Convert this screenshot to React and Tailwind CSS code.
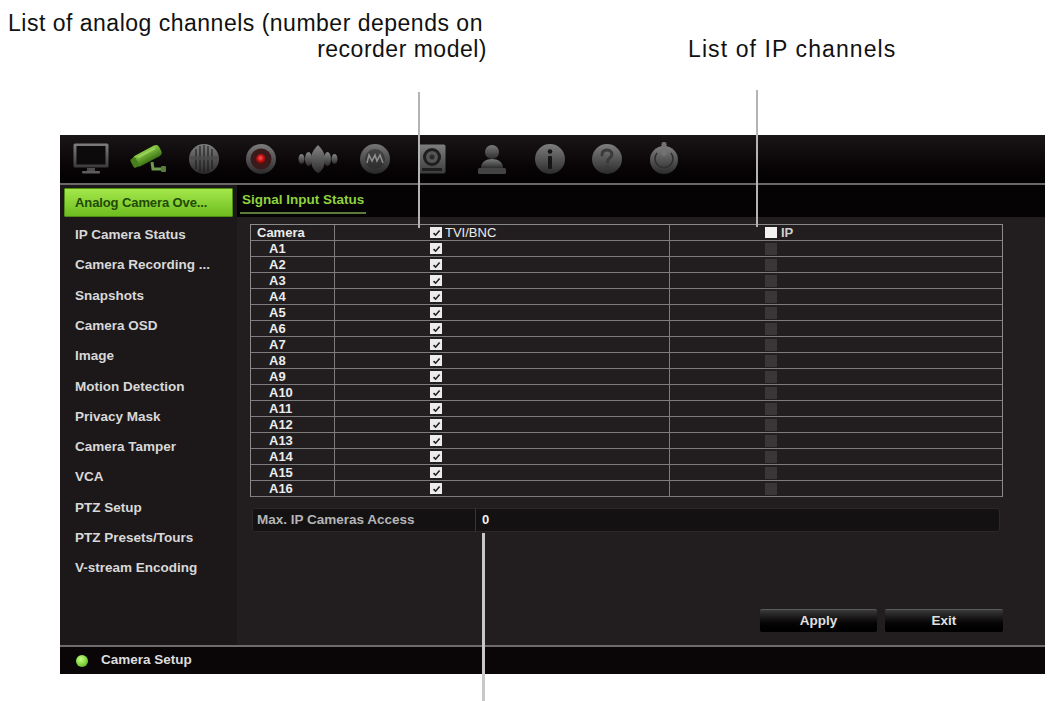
import React from "react";

const sideItems = [
  "IP Camera Status",
  "Camera Recording ...",
  "Snapshots",
  "Camera OSD",
  "Image",
  "Motion Detection",
  "Privacy Mask",
  "Camera Tamper",
  "VCA",
  "PTZ Setup",
  "PTZ Presets/Tours",
  "V-stream Encoding",
];

const rows = Array.from({ length: 16 }, (_, i) => "A" + (i + 1));

function Metal({ id, light = "#9a9a9a", dark = "#262626" }) {
  return (
    <linearGradient id={id} x1="0" y1="0" x2="0" y2="1">
      <stop offset="0" stopColor={light} />
      <stop offset="1" stopColor={dark} />
    </linearGradient>
  );
}

function Check() {
  return (
    <div className="w-[12px] h-[11px] bg-[#ececec] flex items-center justify-center">
      <svg width="9" height="8" viewBox="0 0 9 8">
        <path d="M1.5 4.2 L3.6 6.2 L7.6 1.6" stroke="#222" strokeWidth="1.6" fill="none" />
      </svg>
    </div>
  );
}

function Icons() {
  return (
    <div className="flex items-center h-full">
      {/* monitor */}
      <svg width="36" height="32" viewBox="0 0 36 32" className="ml-[13px]">
        <defs><Metal id="mon" light="#7e7e7e" dark="#3a3a3a" /></defs>
        <rect x="0.5" y="0.5" width="35" height="24" rx="1.5" fill="url(#mon)" />
        <rect x="3.5" y="3" width="29" height="18.5" fill="#0c0a0b" />
        <rect x="14" y="25" width="8" height="3" fill="#4e4e4e" />
        <rect x="9" y="28" width="18" height="2.5" rx="1" fill="#5e5e5e" />
      </svg>
      {/* camera */}
      <svg width="40" height="32" viewBox="0 0 40 32" className="ml-[19px]">
        <defs>
          <linearGradient id="cam" x1="0" y1="0" x2="0" y2="1">
            <stop offset="0" stopColor="#8fcf48" />
            <stop offset="1" stopColor="#3c7414" />
          </linearGradient>
        </defs>
        <g transform="rotate(-28 19 13)">
          <rect x="5" y="7" width="29" height="12" rx="4" fill="url(#cam)" />
          <rect x="2" y="8" width="6" height="10" rx="2" fill="#487f1c" />
          <rect x="10" y="9" width="20" height="2" rx="1" fill="#b9ec7a" opacity="0.5" />
        </g>
        <path d="M24 19 L25 26 L37 26" stroke="#6f9850" strokeWidth="3" fill="none" />
        <rect x="33" y="23" width="5" height="6" rx="1" fill="#587f3a" />
      </svg>
      {/* dome */}
      <svg width="32" height="32" viewBox="0 0 32 32" className="ml-[20px]">
        <defs><Metal id="dome" light="#7e7e7e" dark="#2a2a2a" /></defs>
        <circle cx="16" cy="16" r="15" fill="url(#dome)" />
        <g stroke="#1d1d1d" strokeWidth="1.1">
          <line x1="8" y1="6" x2="8" y2="26" />
          <line x1="12" y1="3" x2="12" y2="29" />
          <line x1="16" y1="2" x2="16" y2="30" />
          <line x1="20" y1="3" x2="20" y2="29" />
          <line x1="24" y1="6" x2="24" y2="26" />
        </g>
        <rect x="2" y="13" width="28" height="4" fill="#4c4c4c" opacity="0.8" />
      </svg>
      {/* record */}
      <svg width="32" height="32" viewBox="0 0 32 32" className="ml-[25px]">
        <defs>
          <Metal id="rec" light="#7c7c7c" dark="#2a2a2a" />
          <radialGradient id="red" cx="0.45" cy="0.4" r="0.6">
            <stop offset="0" stopColor="#ff5a5a" />
            <stop offset="0.5" stopColor="#c81414" />
            <stop offset="1" stopColor="#5a0606" />
          </radialGradient>
        </defs>
        <circle cx="16" cy="16" r="15" fill="url(#rec)" />
        <circle cx="16" cy="16" r="10.5" fill="#3a1a1b" />
        <circle cx="16" cy="16" r="5" fill="url(#red)" />
      </svg>
      {/* ptz */}
      <svg width="40" height="32" viewBox="0 0 40 32" className="ml-[21px]">
        <defs><Metal id="ptz" light="#858585" dark="#2c2c2c" /></defs>
        <ellipse cx="3.5" cy="16" rx="3" ry="5" fill="url(#ptz)" />
        <ellipse cx="10.5" cy="16" rx="3.5" ry="7" fill="url(#ptz)" />
        <path d="M20 2 C26 8 27 12 27 17 C27 24 23 29 20 30 C17 29 13 24 13 17 C13 12 14 8 20 2 Z" fill="url(#ptz)" />
        <ellipse cx="29.5" cy="16" rx="3.5" ry="7" fill="url(#ptz)" />
        <ellipse cx="36.5" cy="16" rx="3" ry="5" fill="url(#ptz)" />
      </svg>
      {/* network */}
      <svg width="32" height="32" viewBox="0 0 32 32" className="ml-[21px]">
        <defs><Metal id="net" light="#767676" dark="#262626" /></defs>
        <circle cx="16" cy="16" r="15" fill="url(#net)" />
        <circle cx="16" cy="16" r="10" fill="#2a2a2a" opacity="0.6" />
        <path d="M8 20 L10 12 L13 18 L16 12 L18 18 L21 12 L24 20" stroke="#8e8e8e" strokeWidth="1.6" fill="none" />
      </svg>
      {/* hdd */}
      <svg width="28" height="30" viewBox="0 0 28 30" className="ml-[27px]">
        <defs><Metal id="hdd" light="#7e7e7e" dark="#3c3c3c" /></defs>
        <rect x="0.5" y="0.5" width="27" height="29" rx="2" fill="url(#hdd)" />
        <circle cx="14" cy="13" r="9" fill="#1e1e1e" />
        <circle cx="14" cy="13" r="6" fill="#555" />
        <circle cx="14" cy="13" r="2.5" fill="#2a2a2a" />
        <rect x="4" y="24" width="20" height="3" fill="#1e1e1e" />
      </svg>
      {/* user */}
      <svg width="30" height="32" viewBox="0 0 30 32" className="ml-[31px]">
        <defs><Metal id="usr" light="#7a7a7a" dark="#2d2d2d" /></defs>
        <circle cx="15" cy="9" r="7" fill="url(#usr)" />
        <path d="M4 25 C4 19 9 16 15 16 C21 16 26 19 26 25 Z" fill="url(#usr)" />
        <rect x="1" y="25" width="28" height="6" rx="1.5" fill="#444" />
      </svg>
      {/* info */}
      <svg width="32" height="32" viewBox="0 0 32 32" className="ml-[27px]">
        <defs><Metal id="inf" light="#7e7e7e" dark="#2b2b2b" /></defs>
        <circle cx="16" cy="16" r="15" fill="url(#inf)" />
        <circle cx="16" cy="8.5" r="2.3" fill="#151515" />
        <rect x="14" y="13" width="4" height="13" rx="1" fill="#151515" />
      </svg>
      {/* help */}
      <svg width="32" height="32" viewBox="0 0 32 32" className="ml-[25px]">
        <defs><Metal id="hlp" light="#7e7e7e" dark="#2b2b2b" /></defs>
        <circle cx="16" cy="16" r="15" fill="url(#hlp)" />
        <path d="M11 12 C11 8 13.5 7 16 7 C19 7 21 9 21 11.5 C21 14.5 16.5 15 16.5 19" stroke="#3a3a3a" strokeWidth="3" fill="none" strokeLinecap="round" />
        <circle cx="16.5" cy="24" r="1.9" fill="#3a3a3a" />
      </svg>
      {/* power */}
      <svg width="32" height="34" viewBox="0 0 32 34" className="ml-[25px] -mt-[2px]">
        <defs><Metal id="pwr" light="#7e7e7e" dark="#2b2b2b" /></defs>
        <circle cx="16" cy="19" r="14" fill="url(#pwr)" />
        <rect x="13.5" y="1" width="5" height="14" rx="2" fill="#727272" />
        <path d="M9 12 A9 9 0 1 0 23 12" stroke="#2e2e2e" strokeWidth="1.5" fill="none" />
      </svg>
    </div>
  );
}

export default function App() {
  return (
    <div className="relative w-[1050px] h-[701px] bg-white overflow-hidden font-['Liberation_Sans',Arial,sans-serif]">
      {/* annotations */}
      <div className="h-[135px] flex items-start text-[#111] text-[23px] leading-[26px] tracking-[0.5px]">
        <div className="ml-[8px] mt-[10px] w-[479px] flex flex-col">
          <div className="whitespace-nowrap">List of analog channels (number depends on</div>
          <div className="text-right whitespace-nowrap">recorder model)</div>
        </div>
        <div className="ml-[201px] mt-[36px] whitespace-nowrap tracking-[1.1px]">List of IP channels</div>
      </div>

      {/* DVR screen */}
      <div className="ml-[60px] w-[985px] h-[539px] flex flex-col bg-black">
        <div className="h-[48px] bg-gradient-to-b from-[#1a1617] to-[#030102]">
          <Icons />
        </div>
        <div className="h-[2px] bg-[#6a6869]" />
        <div className="h-[460px] flex">
          {/* sidebar */}
          <div className="w-[177px] bg-[#1c1819] flex flex-col">
            <div className="mt-[3px] mx-[4px] h-[29px] rounded-[1px] bg-gradient-to-b from-[#a4e84a] to-[#6ebd1e] border border-[#4f8d14] flex items-center pl-[10px]">
              <span className="text-[13px] font-bold text-[#1f4a05] tracking-[-0.1px]">Analog Camera Ove...</span>
            </div>
            <div className="mt-[3px] flex flex-col">
              {sideItems.map((t) => (
                <div key={t} className="h-[30.3px] flex items-center pl-[15px] text-[13.5px] font-bold text-[#d8d8d8] tracking-[0px] whitespace-nowrap">
                  {t}
                </div>
              ))}
            </div>
          </div>

          {/* main */}
          <div className="flex-1 flex flex-col bg-[#221e1f]">
            <div className="h-[32px] bg-[#050304] flex items-end pl-[3px]">
              <div className="border-b-2 border-[#5b7a3b] pb-[1px] px-[2px] mb-[3px]">
                <span className="text-[13.5px] font-bold text-[#8fd23f]">Signal Input Status</span>
              </div>
            </div>

            <div className="flex-1 flex flex-col">
              {/* table */}
              <div className="mt-[7px] ml-[13px] w-[753px] border border-[#8a8a8a] border-b-0 text-[13px] font-bold text-[#ececec]">
                <div className="grid grid-cols-[83px_335px_335px] h-[16px] border-b border-[#7c7c7c]">
                  <div className="pl-[6px] leading-[15px]">Camera</div>
                  <div className="border-l border-[#7c7c7c] flex items-center pl-[95px] gap-[3px]">
                    <Check />
                    <span className="font-normal leading-[15px]">TVI/BNC</span>
                  </div>
                  <div className="border-l border-[#7c7c7c] flex items-center pl-[95px] gap-[4px]">
                    <div className="w-[12px] h-[11px] bg-[#f2f2f2]" />
                    <span className="leading-[15px] text-[#cfcfcf]">IP</span>
                  </div>
                </div>
                {rows.map((r) => (
                  <div key={r} className="grid grid-cols-[83px_335px_335px] h-[16px] border-b border-[#7c7c7c]">
                    <div className="pl-[18px] leading-[15px]">{r}</div>
                    <div className="border-l border-[#7c7c7c] flex items-center pl-[95px]">
                      <Check />
                    </div>
                    <div className="border-l border-[#7c7c7c] flex items-center pl-[95px]">
                      <div className="w-[12px] h-[12px] bg-[#3a3536]" />
                    </div>
                  </div>
                ))}
              </div>

              {/* max IP */}
              <div className="mt-[11px] ml-[15px] w-[748px] h-[24px] rounded-[3px] bg-[#141112] border border-[#2c2829] flex items-center">
                <div className="w-[222px] pl-[4px] text-[13.5px] font-bold text-[#b5b5b5]">Max. IP Cameras Access</div>
                <div className="h-full border-l border-[#3a3637] pl-[6px] flex items-center text-[13px] font-bold text-[#f0f0f0]">0</div>
              </div>

              {/* buttons */}
              <div className="mt-auto mb-[13px] mr-[42px] flex justify-end gap-[8px]">
                <div className="w-[117px] h-[23px] rounded-[2px] bg-gradient-to-b from-[#3a3a3a] via-[#0d0b0c] to-[#000] border-t border-[#5a5a5a] flex items-center justify-center text-[13.5px] font-bold text-[#e0e0e0]">
                  Apply
                </div>
                <div className="w-[118px] h-[23px] rounded-[2px] bg-gradient-to-b from-[#3a3a3a] via-[#0d0b0c] to-[#000] border-t border-[#5a5a5a] flex items-center justify-center text-[13.5px] font-bold text-[#e0e0e0]">
                  Exit
                </div>
              </div>
            </div>
          </div>
        </div>
        <div className="h-[2px] bg-[#6d6b6c]" />
        <div className="h-[27px] bg-[#0a0607] flex items-center pl-[16px] gap-[13px]">
          <div className="w-[12px] h-[12px] rounded-full bg-[radial-gradient(circle_at_40%_35%,#c8ff8a,#7ed33a_55%,#4f9a1a)]" />
          <span className="text-[13.5px] font-bold text-[#dedede]">Camera Setup</span>
        </div>
      </div>

      {/* callout lines */}
      <div className="absolute left-[418px] top-[92px] w-[2px] h-[136px] bg-[#b4b4b4]" />
      <div className="absolute left-[756px] top-[90px] w-[2px] h-[137px] bg-[#b4b4b4]" />
      <div className="absolute left-[482px] top-[533px] w-[3px] h-[168px] bg-[#c8c8c8]" />
    </div>
  );
}
